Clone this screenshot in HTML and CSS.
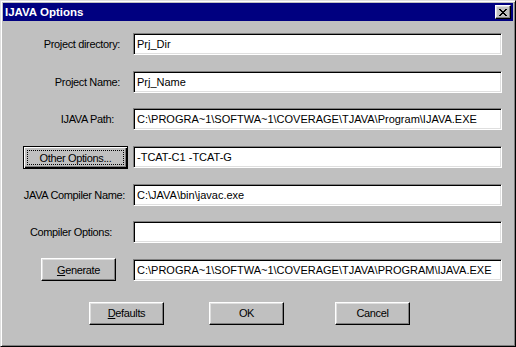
FILE: index.html
```html
<!DOCTYPE html>
<html lang="en">
<head>
    <meta charset="UTF-8">
    <meta name="viewport" content="width=device-width, initial-scale=1.0">
    <title>IJAVA Options</title>
    <link rel="stylesheet" href="styles.css">
</head>
<body>
    <div class="window">
        <div class="titlebar">
            <span class="title">IJAVA Options</span>
            <button class="close-btn" title="Close">
                <svg width="8" height="7" viewBox="0 0 8 7" shape-rendering="crispEdges">
                    <path d="M0 0h2v1H0zM6 0h2v1H6zM1 1h2v1H1zM5 1h2v1H5zM2 2h4v1H2zM3 3h2v1H3zM2 4h4v1H2zM1 5h2v1H1zM5 5h2v1H5zM0 6h2v1H0zM6 6h2v1H6z" fill="#000"/>
                </svg>
            </button>
        </div>

        <div class="content">
            <div class="form">
                <div class="label pr-13">Project directory:</div>
                <div class="field">Prj_Dir</div>

                <div class="label pr-13">Project Name:</div>
                <div class="field">Prj_Name</div>

                <div class="label pr-19">IJAVA Path:</div>
                <div class="field">C:\PROGRA~1\SOFTWA~1\COVERAGE\TJAVA\Program\IJAVA.EXE</div>

                <div class="label">
                    <button class="btn btn-default btn-other"><span class="focus">Other Options...</span></button>
                </div>
                <div class="field">-TCAT-C1 -TCAT-G</div>

                <div class="label pr-8">JAVA Compiler Name:</div>
                <div class="field">C:\JAVA\bin\javac.exe</div>

                <div class="label pr-21">Compiler Options:</div>
                <div class="field"></div>

                <div class="label">
                    <button class="btn btn-generate"><u>G</u>enerate</button>
                </div>
                <div class="field">C:\PROGRA~1\SOFTWA~1\COVERAGE\TJAVA\PROGRAM\IJAVA.EXE</div>
            </div>

            <div class="actions">
                <button class="btn"><u>D</u>efaults</button>
                <button class="btn btn-ok">OK</button>
                <button class="btn btn-cancel">Cancel</button>
            </div>
        </div>
    </div>
</body>
</html>
```

FILE: styles.css
```css
body {
    margin: 0;
    font-family: "Liberation Sans", Arial, sans-serif;
    font-size: 11px;
    color: #000;
    background: #c0c0c0;
}
.window {
    box-sizing: border-box;
    width: 516px;
    height: 347px;
    padding: 2px;
    background: #c0c0c0;
    border: 1px solid;
    border-color: #dfdfdf #000 #000 #dfdfdf;
    box-shadow: inset 1px 1px #fff, inset -1px -1px #808080;
}
.titlebar {
    height: 18px;
    background: #000080;
    color: #fff;
    display: flex;
    align-items: center;
    justify-content: space-between;
    padding: 0 2px;
}
.title {
    font-weight: bold;
    font-size: 11.5px;
}
.close-btn {
    box-sizing: border-box;
    width: 16px;
    height: 14px;
    padding: 0;
    background: #c0c0c0;
    border: 1px solid;
    border-color: #fff #000 #000 #fff;
    box-shadow: inset -1px -1px #808080, inset 1px 1px #dfdfdf;
    display: flex;
    align-items: center;
    justify-content: center;
}
.content {
    padding-top: 12px;
}
.form {
    display: grid;
    grid-template-columns: 130px 369px;
    grid-auto-rows: 22px;
    row-gap: 15.67px;
}
.label {
    display: flex;
    align-items: center;
    justify-content: flex-end;
    white-space: nowrap;
    letter-spacing: -0.35px;
}
.pr-8 { padding-right: 8px; }
.pr-13 { padding-right: 13px; }
.pr-19 { padding-right: 19px; }
.pr-21 { padding-right: 21px; }
.field {
    box-sizing: border-box;
    height: 22px;
    padding: 0 3px;
    background: #fff;
    border: 1px solid;
    border-color: #808080 #fff #fff #808080;
    box-shadow: inset 1px 1px #000, inset -1px -1px #dfdfdf;
    display: flex;
    align-items: center;
    white-space: nowrap;
    overflow: hidden;
}
.btn {
    box-sizing: border-box;
    width: 75px;
    height: 23px;
    padding: 0;
    font: inherit;
    letter-spacing: -0.35px;
    color: #000;
    background: #c0c0c0;
    border: 1px solid;
    border-color: #fff #000 #000 #fff;
    box-shadow: inset -1px -1px #808080, inset 1px 1px #dfdfdf;
}
.btn-default {
    border-color: #000;
    box-shadow: inset 1px 1px #fff, inset -1px -1px #000, inset -2px -2px #808080;
    display: flex;
    padding: 3px;
}
.focus {
    flex: 1;
    border: 1px dotted #000;
    display: flex;
    align-items: center;
    justify-content: center;
}
.label .btn-other {
    width: 105px;
    margin: 2px auto 0 20px;
}
.label .btn-generate {
    margin-left: 38px;
    margin-right: auto;
}
.actions {
    display: flex;
    margin-top: 21px;
    padding-left: 86px;
}
.btn-ok { margin-left: 45px; }
.btn-cancel { margin-left: 51px; }
```
